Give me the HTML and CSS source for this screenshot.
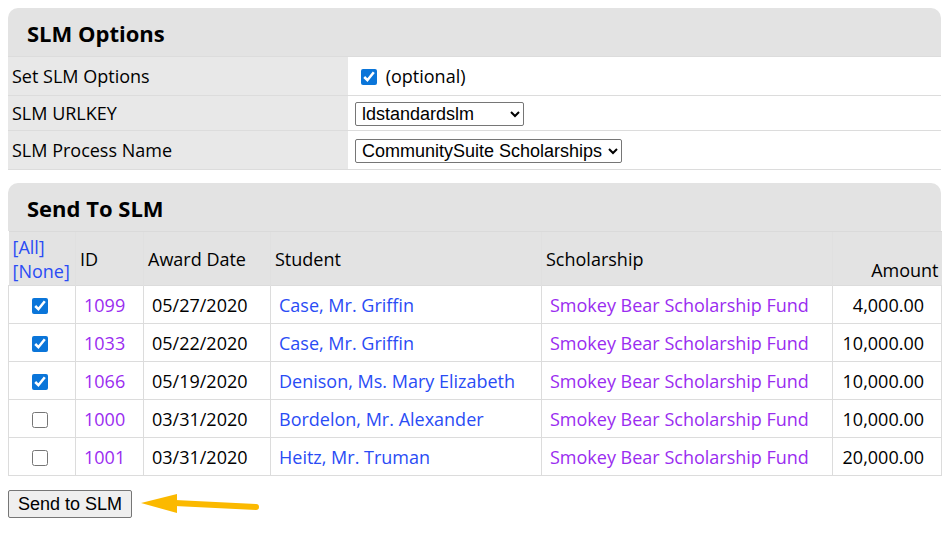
FILE: index.html
```html
<!DOCTYPE html>
<html lang="en">
<head>
    <meta charset="UTF-8">
    <title>SLM Options</title>
    <link rel="stylesheet" href="styles.css">
</head>
<body>
    <div class="panel">
        <h2 class="panel-title">SLM Options</h2>
        <table class="options">
            <tr>
                <td class="label">Set SLM Options</td>
                <td class="value"><input type="checkbox" class="check" checked> (optional)</td>
            </tr>
            <tr>
                <td class="label">SLM URLKEY</td>
                <td class="value">
                    <select class="pick pick-key">
                        <option>ldstandardslm</option>
                    </select>
                </td>
            </tr>
            <tr>
                <td class="label">SLM Process Name</td>
                <td class="value">
                    <select class="pick">
                        <option>CommunitySuite Scholarships</option>
                    </select>
                </td>
            </tr>
        </table>
    </div>

    <div class="panel">
        <h2 class="panel-title">Send To SLM</h2>
        <table class="awards">
            <colgroup>
                <col class="col-check">
                <col class="col-id">
                <col class="col-date">
                <col class="col-student">
                <col class="col-fund">
                <col class="col-amount">
            </colgroup>
            <thead>
                <tr>
                    <th><a href="#">[All]</a><br><a href="#">[None]</a></th>
                    <th>ID</th>
                    <th>Award Date</th>
                    <th>Student</th>
                    <th>Scholarship</th>
                    <th class="amount">Amount</th>
                </tr>
            </thead>
            <tbody id="awardrows"></tbody>
        </table>
    </div>

    <div class="actions">
        <button class="send">Send to SLM</button>
        <svg class="pointer" width="124" height="26" viewBox="0 0 124 26">
            <path d="M34 11 L115 15" stroke="#fbb900" stroke-width="6" stroke-linecap="round"/>
            <polygon points="0,11 36,2 36,21" fill="#fbb900"/>
        </svg>
    </div>

    <script>
        // rows of awards waiting to be sent
        const awards = [
            { id: 1099, date: '05/27/2020', student: 'Case, Mr. Griffin', fund: 'Smokey Bear Scholarship Fund', amount: '4,000.00', checked: true },
            { id: 1033, date: '05/22/2020', student: 'Case, Mr. Griffin', fund: 'Smokey Bear Scholarship Fund', amount: '10,000.00', checked: true },
            { id: 1066, date: '05/19/2020', student: 'Denison, Ms. Mary Elizabeth', fund: 'Smokey Bear Scholarship Fund', amount: '10,000.00', checked: true },
            { id: 1000, date: '03/31/2020', student: 'Bordelon, Mr. Alexander', fund: 'Smokey Bear Scholarship Fund', amount: '10,000.00', checked: false },
            { id: 1001, date: '03/31/2020', student: 'Heitz, Mr. Truman', fund: 'Smokey Bear Scholarship Fund', amount: '20,000.00', checked: false }
        ];

        const awardrows = document.getElementById('awardrows');

        awards.forEach(award => {
            const tr = document.createElement('tr');
            tr.innerHTML = `
                <td class="pick-cell"><input type="checkbox" class="check" ${award.checked ? 'checked' : ''}></td>
                <td><a href="#" class="visited">${award.id}</a></td>
                <td>${award.date}</td>
                <td><a href="#">${award.student}</a></td>
                <td><a href="#" class="visited">${award.fund}</a></td>
                <td class="amount">${award.amount}</td>
            `;
            awardrows.appendChild(tr);
        });
    </script>
</body>
</html>
```

FILE: styles.css
```css
body {
    font-family: "Open Sans", "Noto Sans", sans-serif;
    font-size: 18px;
    color: #000;
    margin: 8px;
}

a {
    color: #2a4cf5;
    text-decoration: none;
}

a.visited {
    color: #9a2cf0;
}

.panel {
    width: 933px;
    margin-bottom: 13px;
}

.panel-title {
    margin: 0;
    height: 48px;
    line-height: 50px;
    padding-left: 19px;
    font-size: 22px;
    font-weight: bold;
    background: #e3e3e3;
    border-radius: 10px 10px 0 0;
}

table {
    width: 100%;
    border-collapse: collapse;
}

.options td {
    border-top: 1px solid #dcdcdc;
    padding: 0 4px;
}

.options tr:nth-child(1) td {
    height: 38px;
}

.options tr:nth-child(2) td {
    height: 34px;
}

.options tr:nth-child(3) td {
    height: 38px;
}

.options tr:last-child td {
    border-bottom: 1px solid #dcdcdc;
}

.options .label {
    width: 332px;
    background: #e8e8e8;
}

.options .value {
    background: #fff;
    padding-left: 7px;
}

.check {
    width: 16px;
    height: 16px;
    margin: 0 4px 0 6px;
    vertical-align: -2px;
    accent-color: #0a75d9;
}

.pick {
    font-family: "Liberation Sans", Arial, sans-serif;
    font-size: 18px;
    height: 24px;
    padding: 0 2px;
    border: 1px solid #767676;
    border-radius: 2px;
    background: #fff;
    color: #000;
}

.pick-key {
    width: 169px;
}

.awards {
    table-layout: fixed;
}

.col-check {
    width: 67px;
}

.col-id {
    width: 68px;
}

.col-date {
    width: 127px;
}

.col-student {
    width: 271px;
}

.col-fund {
    width: 291px;
}

.col-amount {
    width: 109px;
}

.awards th {
    background: #e3e3e3;
    font-weight: normal;
    text-align: left;
    height: 50px;
    padding: 0 4px;
    border-top: 1px solid #dadada;
    border-left: 1px solid #e0e0e0;
}

.awards th:first-child {
    border-left: none;
}

.awards th a {
    line-height: 23px;
}

.awards th.amount {
    text-align: right;
    vertical-align: bottom;
    padding-bottom: 3px;
    padding-right: 3px;
}

.awards td {
    height: 37px;
    padding: 0 8px;
    border: 1px solid #dcdcdc;
    background: #fff;
    white-space: nowrap;
}

.awards td.pick-cell {
    text-align: center;
    padding: 0 6px 0 0;
}

.awards td.amount {
    text-align: right;
    padding-right: 17px;
}

.actions {
    display: flex;
    align-items: center;
    margin-top: 14px;
}

.send {
    font-family: "Liberation Sans", Arial, sans-serif;
    font-size: 18px;
    height: 28px;
    padding: 0 9px;
    background: #efefef;
    border: 1px solid #767676;
    border-radius: 2px;
    color: #000;
}

.pointer {
    margin-left: 9px;
    margin-top: 2px;
}
```
